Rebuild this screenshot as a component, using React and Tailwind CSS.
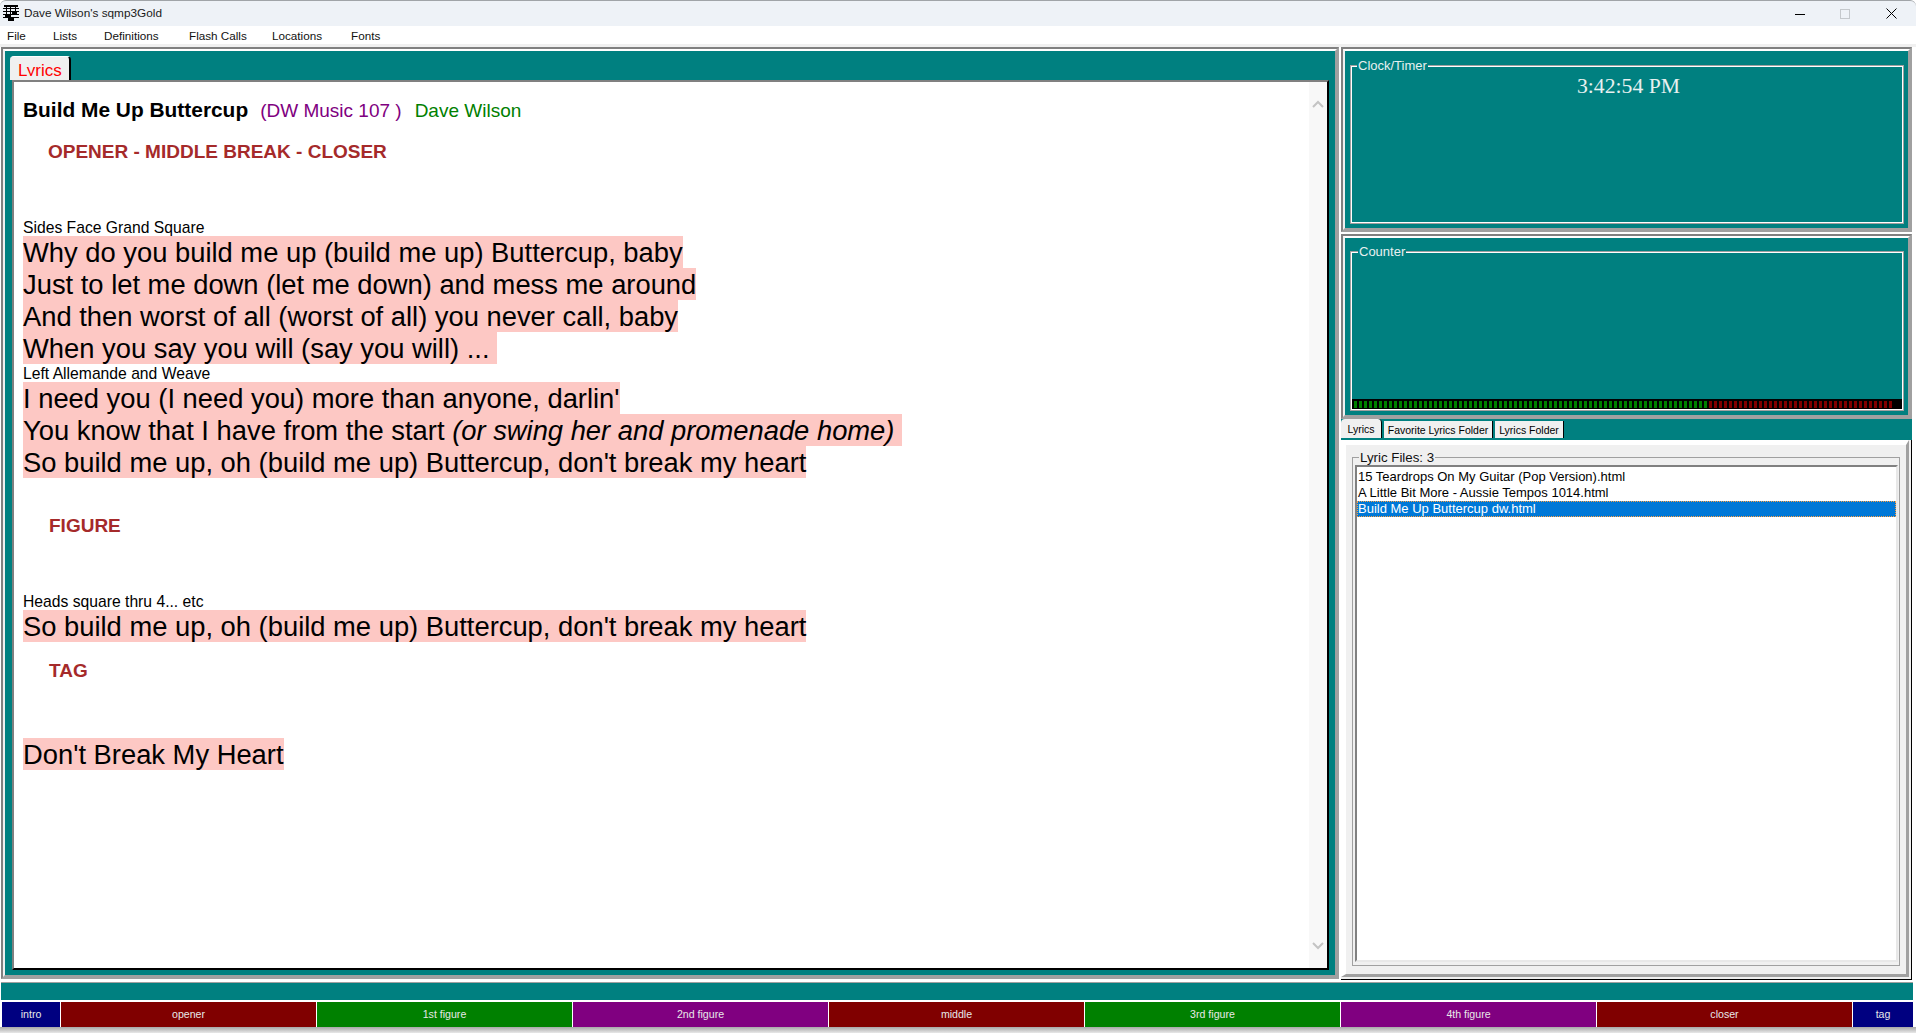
import React from 'react';

const menus = [
    ['File', 'w-[46px]'],
    ['Lists', 'w-[51px]'],
    ['Definitions', 'w-[85px]'],
    ['Flash Calls', 'w-[83px]'],
    ['Locations', 'w-[79px]'],
    ['Fonts', 'w-[50px]'],
];

const cues = [
    ['intro', 'bg-[#000080]'],
    ['opener', 'bg-[#800000]'],
    ['1st figure', 'bg-[#008000]'],
    ['2nd figure', 'bg-[#800080]'],
    ['middle', 'bg-[#800000]'],
    ['3rd figure', 'bg-[#008000]'],
    ['4th figure', 'bg-[#800080]'],
    ['closer', 'bg-[#800000]'],
    ['tag', 'bg-[#000080]'],
];

const meter = Array.from({ length: 108 }, (_, i) => i);

const WindowIcon = () => (
    <svg width="16" height="16" viewBox="0 0 16 16" className="mb-[2px] shrink-0">
        <g stroke="#000" strokeWidth="1" fill="none">
            <path d="M0 3.5h16M0 6.5h16M0 9.5h16M0 12.5h16" />
            <path d="M3.5 1v11M12.5 1v9M7.5 2v13" />
        </g>
        <path d="M1 0h14v2H1zM5 12h6v4H5zM2 9h5v3H2zM9 6h5v3H9z" fill="#000" />
    </svg>
);

const Line = ({ children }) => (
    <div className="flex h-[32px] whitespace-pre text-[27.35px] leading-[34px] text-black">
        <span className="h-[32px] bg-[#fdc8c4]">{children}</span>
    </div>
);

const Cue = ({ children }) => (
    <div className="h-[18px] text-[15.7px] leading-[19px] text-black">{children}</div>
);

const Section = ({ children, className }) => (
    <div className={`h-[24px] text-[19px] font-bold leading-[24px] text-[#a52a2a] ${className}`}>{children}</div>
);

const Frame = ({ children, className }) => (
    <div className={`border-2 border-t-[#808080] border-l-[#808080] border-r-[#a0a0a0] border-b-[#a0a0a0] ${className}`}>
        <div className="h-full border-2 border-t-white border-l-[#f0f0f0] border-r-[#a0a0a0] border-b-[#a0a0a0] bg-[#008080]">
            {children}
        </div>
    </div>
);

const Group = ({ label, children, className }) => (
    <fieldset className={`ml-[5px] mr-[4px] border border-[#a0a0a0] shadow-[inset_0_0_0_1px_#fff] ${className}`}>
        <legend className="ml-[6px] bg-[#008080] px-[1px] text-[13px] leading-[15px] text-[#e8f0f0]">{label}</legend>
        {children}
    </fieldset>
);

export default function App() {
    return (
        <div className="flex h-[1033px] w-[1916px] flex-col overflow-hidden bg-white font-['Liberation_Sans',Arial,sans-serif]">
            <header className="flex h-[26px] shrink-0 items-center rounded-t-md border-t border-[#a0a4a8] bg-[#eef2f7] pl-[3px]">
                <WindowIcon />
                <span className="ml-[5px] text-[11.8px] text-[#1a1a1a]">Dave Wilson's sqmp3Gold</span>
                <div className="ml-auto flex items-center">
                    <svg width="10" height="10" viewBox="0 0 10 10" className="mr-[35px]"><path d="M0 5.5h10" stroke="#000" /></svg>
                    <svg width="10" height="10" viewBox="0 0 10 10" className="mr-[36px]"><rect x="0.5" y="0.5" width="9" height="9" fill="none" stroke="#c4c8cc" /></svg>
                    <svg width="11" height="11" viewBox="0 0 11 11" className="mr-[19px]"><path d="M0.5 0.5l10 10M10.5 0.5l-10 10" stroke="#000" /></svg>
                </div>
            </header>

            <nav className="flex h-[18px] shrink-0 items-center pl-[7px] pt-[2px] text-[11.7px] text-[#111]">
                {menus.map(([m, w]) => <span key={m} className={w}>{m}</span>)}
            </nav>
            <div className="h-[3px] shrink-0 bg-[#f0f0f0]" />

            <main className="flex h-[933px] shrink-0 pl-[1px] pr-[4px]">
                {/* lyrics side */}
                <Frame className="h-[932px] w-[1338px] shrink-0">
                    <div className="flex h-full flex-col">
                        <div className="flex h-[29px] shrink-0 items-end pl-[5px]">
                            <div className="h-[24px] w-[61px] overflow-hidden rounded-t-sm border-r-2 border-t border-black border-t-white bg-[#f0f0f0] pl-[8px]">
                                <div className="h-[19px] overflow-hidden text-[17px] leading-[28px] text-[#ff0000]">Lyrics</div>
                            </div>
                        </div>
                        <div className="mb-[5px] ml-[7px] mr-[6px] flex min-h-0 flex-1 border-2 border-b-black border-l-[#808080] border-r-black border-t-[#808080] bg-white">
                            <article className="min-w-0 flex-1 pl-[9px] pt-[16px]">
                                <div className="flex h-[24px] items-baseline whitespace-pre text-[19px] leading-[24px]">
                                    <span className="text-[20.9px] font-bold text-black">Build Me Up Buttercup</span>
                                    <span className="ml-[12px] text-[#800080]">(DW Music 107 )</span>
                                    <span className="ml-[13px] text-[#008000]">Dave Wilson</span>
                                </div>
                                <Section className="mt-[18px] pl-[25px]">OPENER - MIDDLE BREAK - CLOSER</Section>
                                <div className="mt-[54px]"><Cue>Sides Face Grand Square</Cue></div>
                                <Line>Why do you build me up (build me up) Buttercup, baby</Line>
                                <Line>Just to let me down (let me down) and mess me around</Line>
                                <Line>And then worst of all (worst of all) you never call, baby</Line>
                                <Line>When you say you will (say you will) ... </Line>
                                <Cue>Left Allemande and Weave</Cue>
                                <Line>I need you (I need you) more than anyone, darlin'</Line>
                                <Line>You know that I have from the start <i>(or swing her and promenade home)</i> </Line>
                                <Line>So build me up, oh (build me up) Buttercup, don't break my heart</Line>
                                <Section className="mt-[36px] pl-[26px]">FIGURE</Section>
                                <div className="mt-[54px]"><Cue>Heads square thru 4... etc</Cue></div>
                                <Line>So build me up, oh (build me up) Buttercup, don't break my heart</Line>
                                <Section className="mt-[17px] pl-[26px]">TAG</Section>
                                <div className="mt-[55px]"><Line>Don't Break My Heart</Line></div>
                            </article>
                            <aside className="flex w-[18px] shrink-0 flex-col items-center justify-between bg-[#f8f8f8] pb-[18px] pr-[1px] pt-[18px]">
                                <svg width="12" height="8" viewBox="0 0 12 8"><path d="M1 7l5-5 5 5" fill="none" stroke="#c4c4c4" strokeWidth="2" /></svg>
                                <svg width="12" height="8" viewBox="0 0 12 8"><path d="M1 1l5 5 5-5" fill="none" stroke="#c4c4c4" strokeWidth="2" /></svg>
                            </aside>
                        </div>
                    </div>
                </Frame>

                {/* clock, counter, files */}
                <div className="ml-[2px] flex min-w-0 flex-1 flex-col">
                    <Frame className="h-[185px] shrink-0">
                        <div className="pt-[7px]">
                            <Group label="Clock/Timer" className="h-[166px]">
                                <div className="mt-[1px] pl-[3px] text-center font-['Liberation_Serif',serif] text-[21.7px] leading-[24px] text-[#e8f0f0]">3:42:54 PM</div>
                            </Group>
                        </div>
                    </Frame>
                    <Frame className="mt-[2px] h-[185px] shrink-0">
                        <div className="pt-[6px]">
                            <Group label="Counter" className="flex h-[167px] flex-col justify-end p-[1px]">
                                <div className="flex h-[10px] items-center gap-[2px] bg-black px-[2px]">
                                    {meter.map(i => (
                                        <span key={i} className={i < 71 ? 'h-[7px] w-[3px] bg-[#008000]' : 'h-[7px] w-[3px] bg-[#800000]'} />
                                    ))}
                                </div>
                            </Group>
                        </div>
                    </Frame>
                    <div className="flex h-[21px] shrink-0 items-end whitespace-nowrap bg-[#008080] pb-[2px] text-[10.5px] leading-[16px] text-black">
                        <span className="flex h-[19px] w-[41px] items-center justify-center rounded-t-sm border-r border-black bg-[#f0f0f0]">Lyrics</span>
                        <span className="ml-[2px] flex h-[17px] w-[109px] items-center justify-center border-r border-black bg-[#f0f0f0]">Favorite Lyrics Folder</span>
                        <span className="ml-[2px] flex h-[17px] w-[69px] items-center justify-center border-r border-black bg-[#f0f0f0]">Lyrics Folder</span>
                    </div>
                    <section className="min-h-0 flex-1 border-b border-r border-black">
                        <div className="h-full border-b-2 border-r-2 border-[#f0f0f0]">
                            <div className="h-full border-[5px] border-b-[3px] border-r-[3px] border-b-[#a0a0a0] border-l-white border-r-[#a0a0a0] border-t-white bg-[#f0f0f0] pl-[6px] pr-[6px] pt-[5px]">
                                <fieldset className="h-[516px] border border-[#a0a0a0] pb-[3px] pl-[2px] pr-[1px]">
                                    <legend className="ml-[4px] bg-[#f0f0f0] px-[1px] text-[13.3px] leading-[15px] text-[#111]">Lyric Files: 3</legend>
                                    <ul className="h-full border-2 border-b-[#e8e8e8] border-l-[#808080] border-r-[#e8e8e8] border-t-[#808080] bg-white pt-[2px] text-[13px] leading-[16px] text-black">
                                        <li className="pl-[1px]">15 Teardrops On My Guitar (Pop Version).html</li>
                                        <li className="pl-[1px]">A Little Bit More - Aussie Tempos 1014.html</li>
                                        <li className="h-[16px] border border-dotted border-[#ffa040] bg-[#0078d7] leading-[14px] text-white">Build Me Up Buttercup dw.html</li>
                                    </ul>
                                </fieldset>
                            </div>
                        </div>
                    </section>
                </div>
            </main>

            <div className="ml-[1px] mr-[3px] mt-[2px] h-[18px] shrink-0 border-t border-[#a0a0a0] bg-[#008080]" />
            <footer className="ml-[2px] mr-[3px] mt-[2px] grid h-[25px] shrink-0 grid-cols-[58px_repeat(7,255px)_1fr] gap-[1px]">
                {cues.map(([label, bg], i) => (
                    <div key={i} className={`flex items-center justify-center text-[10.6px] text-[#e8e8e8] ${bg}`}>{label}</div>
                ))}
            </footer>
            <div className="min-h-0 flex-1 bg-gradient-to-b from-[#a8a8a8] to-[#e8e8e8]" />
        </div>
    );
}
